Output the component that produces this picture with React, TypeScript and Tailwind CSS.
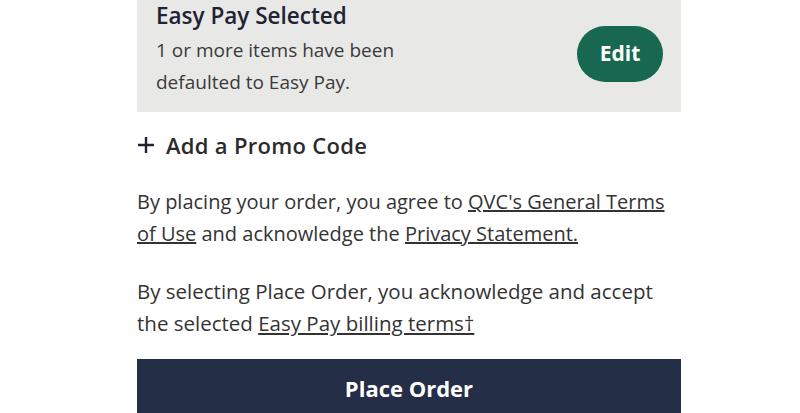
import React from "react";

export default function App() {
  return (
    <div className="w-[800px] h-[413px] bg-white overflow-hidden font-['Open_Sans',sans-serif] text-[#333333]">
      <div className="ml-[137px] w-[544px]">
        <div className="bg-[#e8e8e7] h-[112px] flex items-center justify-between pl-[19px] pr-[18px] pb-[6px]">
          <div className="flex flex-col">
            <div className="text-[22.5px] leading-[24px] font-semibold text-[#1e2233] mt-[-5px]">Easy Pay Selected</div>
            <div className="text-[19px] leading-[32px] text-[#3a3a3a] mt-[6px]">
              1 or more items have been
              <br />
              defaulted to Easy Pay.
            </div>
          </div>
          <button className="w-[86px] h-[56px] rounded-full bg-[#17684e] text-white text-[21px] font-bold mt-[2px]">
            Edit
          </button>
        </div>
        <div className="flex items-center gap-[11px] mt-[21px] h-[24px]">
          <svg width="18" height="18" viewBox="0 0 18 18">
            <path d="M9 1v16M1 9h16" stroke="#1e2233" strokeWidth="2.4" />
          </svg>
          <span className="text-[22px] font-semibold text-[#2b2b2b] tracking-[0.3px]">Add a Promo Code</span>
        </div>
        <div className="text-[20px] leading-[32px] mt-[29px]">
          By placing your order, you agree to <span className="underline">QVC's General Terms</span>
          <br />
          <span className="underline">of Use</span> and acknowledge the <span className="underline">Privacy Statement.</span>
        </div>
        <div className="text-[20.5px] leading-[32px] mt-[25px]">
          By selecting Place Order, you acknowledge and accept
          <br />
          the selected <span className="underline">Easy Pay billing terms†</span>
        </div>
        <button className="mt-[20px] w-full h-[58px] bg-[#242e46] text-white text-[22px] font-bold">Place Order</button>
      </div>
    </div>
  );
}
